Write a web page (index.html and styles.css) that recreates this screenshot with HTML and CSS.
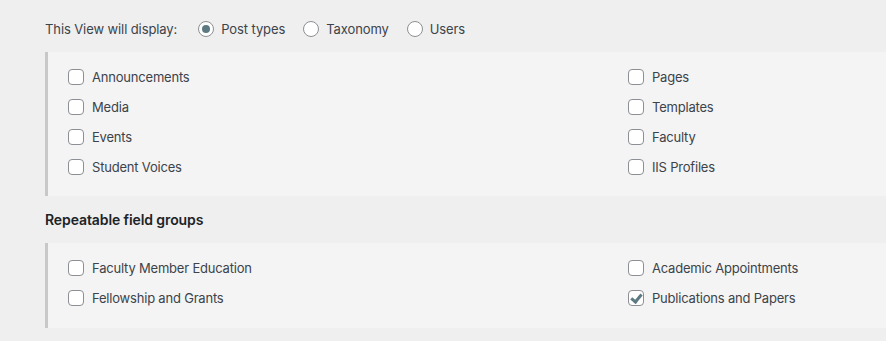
FILE: index.html
```html
<!DOCTYPE html>
<html lang="en">
<head>
  <meta charset="UTF-8">
  <meta name="viewport" content="width=device-width, initial-scale=1.0">
  <title>View settings</title>
  <link rel="stylesheet" href="styles.css">
</head>
<body>

  <div class="display-row">
    <span class="display-label">This View will display:</span>
    <label class="radio-option"><input type="radio" name="display" checked> Post types</label>
    <label class="radio-option"><input type="radio" name="display"> Taxonomy</label>
    <label class="radio-option"><input type="radio" name="display"> Users</label>
  </div>

  <div class="options-panel panel-posts">
    <label class="check-option"><input type="checkbox"> Announcements</label>
    <label class="check-option"><input type="checkbox"> Pages</label>
    <label class="check-option"><input type="checkbox"> Media</label>
    <label class="check-option"><input type="checkbox"> Templates</label>
    <label class="check-option"><input type="checkbox"> Events</label>
    <label class="check-option"><input type="checkbox"> Faculty</label>
    <label class="check-option"><input type="checkbox"> Student Voices</label>
    <label class="check-option"><input type="checkbox"> IIS Profiles</label>
  </div>

  <h3 class="section-title">Repeatable field groups</h3>

  <div class="options-panel panel-groups">
    <label class="check-option"><input type="checkbox"> Faculty Member Education</label>
    <label class="check-option"><input type="checkbox"> Academic Appointments</label>
    <label class="check-option"><input type="checkbox"> Fellowship and Grants</label>
    <label class="check-option"><input type="checkbox" checked> Publications and Papers</label>
  </div>

</body>
</html>
```

FILE: styles.css
```css
body {
  margin: 0;
  background-color: #efefef;
  font-family: Inter, "Noto Sans", sans-serif;
  font-size: 13px;
  letter-spacing: -0.2px;
  color: #3c434a;
  overflow: hidden;
}

.display-row {
  display: flex;
  align-items: center;
  height: 52px;
  padding: 6px 0 0 45px;
  box-sizing: border-box;
  letter-spacing: -0.1px;
}

.display-label {
  margin-right: 21px;
}

.radio-option {
  display: flex;
  align-items: center;
  margin-right: 18px;
}

.options-panel {
  display: grid;
  grid-template-columns: 560px 1fr;
  margin-left: 45px;
  border-left: 3px solid #c8c8c8;
  background-color: #f4f4f4;
  padding-left: 20px;
}

.panel-posts {
  padding-top: 10px;
  padding-bottom: 14px;
}

.panel-groups {
  padding-top: 10px;
  padding-bottom: 15px;
}

.check-option {
  display: flex;
  align-items: center;
  height: 30px;
}

.section-title {
  margin: 0;
  padding-left: 45px;
  line-height: 47px;
  font-size: 14px;
  font-weight: 600;
  letter-spacing: -0.1px;
  color: #1d2327;
}

input[type="checkbox"],
input[type="radio"] {
  appearance: none;
  -webkit-appearance: none;
  margin: 0 8px 0 0;
  width: 16px;
  height: 16px;
  border: 1px solid #8c8f94;
  background-color: #fff;
  position: relative;
  flex-shrink: 0;
}

input[type="checkbox"] {
  border-radius: 4px;
}

input[type="radio"] {
  border-radius: 50%;
  margin-right: 7px;
}

input[type="radio"]:checked::before {
  content: "";
  position: absolute;
  top: 3px;
  left: 3px;
  width: 8px;
  height: 8px;
  border-radius: 50%;
  background-color: #5d7a83;
}

input[type="checkbox"]:checked::before {
  content: "";
  position: absolute;
  top: 1px;
  left: 4px;
  width: 4px;
  height: 8px;
  border: solid #5d7a83;
  border-width: 0 3px 3px 0;
  transform: rotate(40deg);
}
```
